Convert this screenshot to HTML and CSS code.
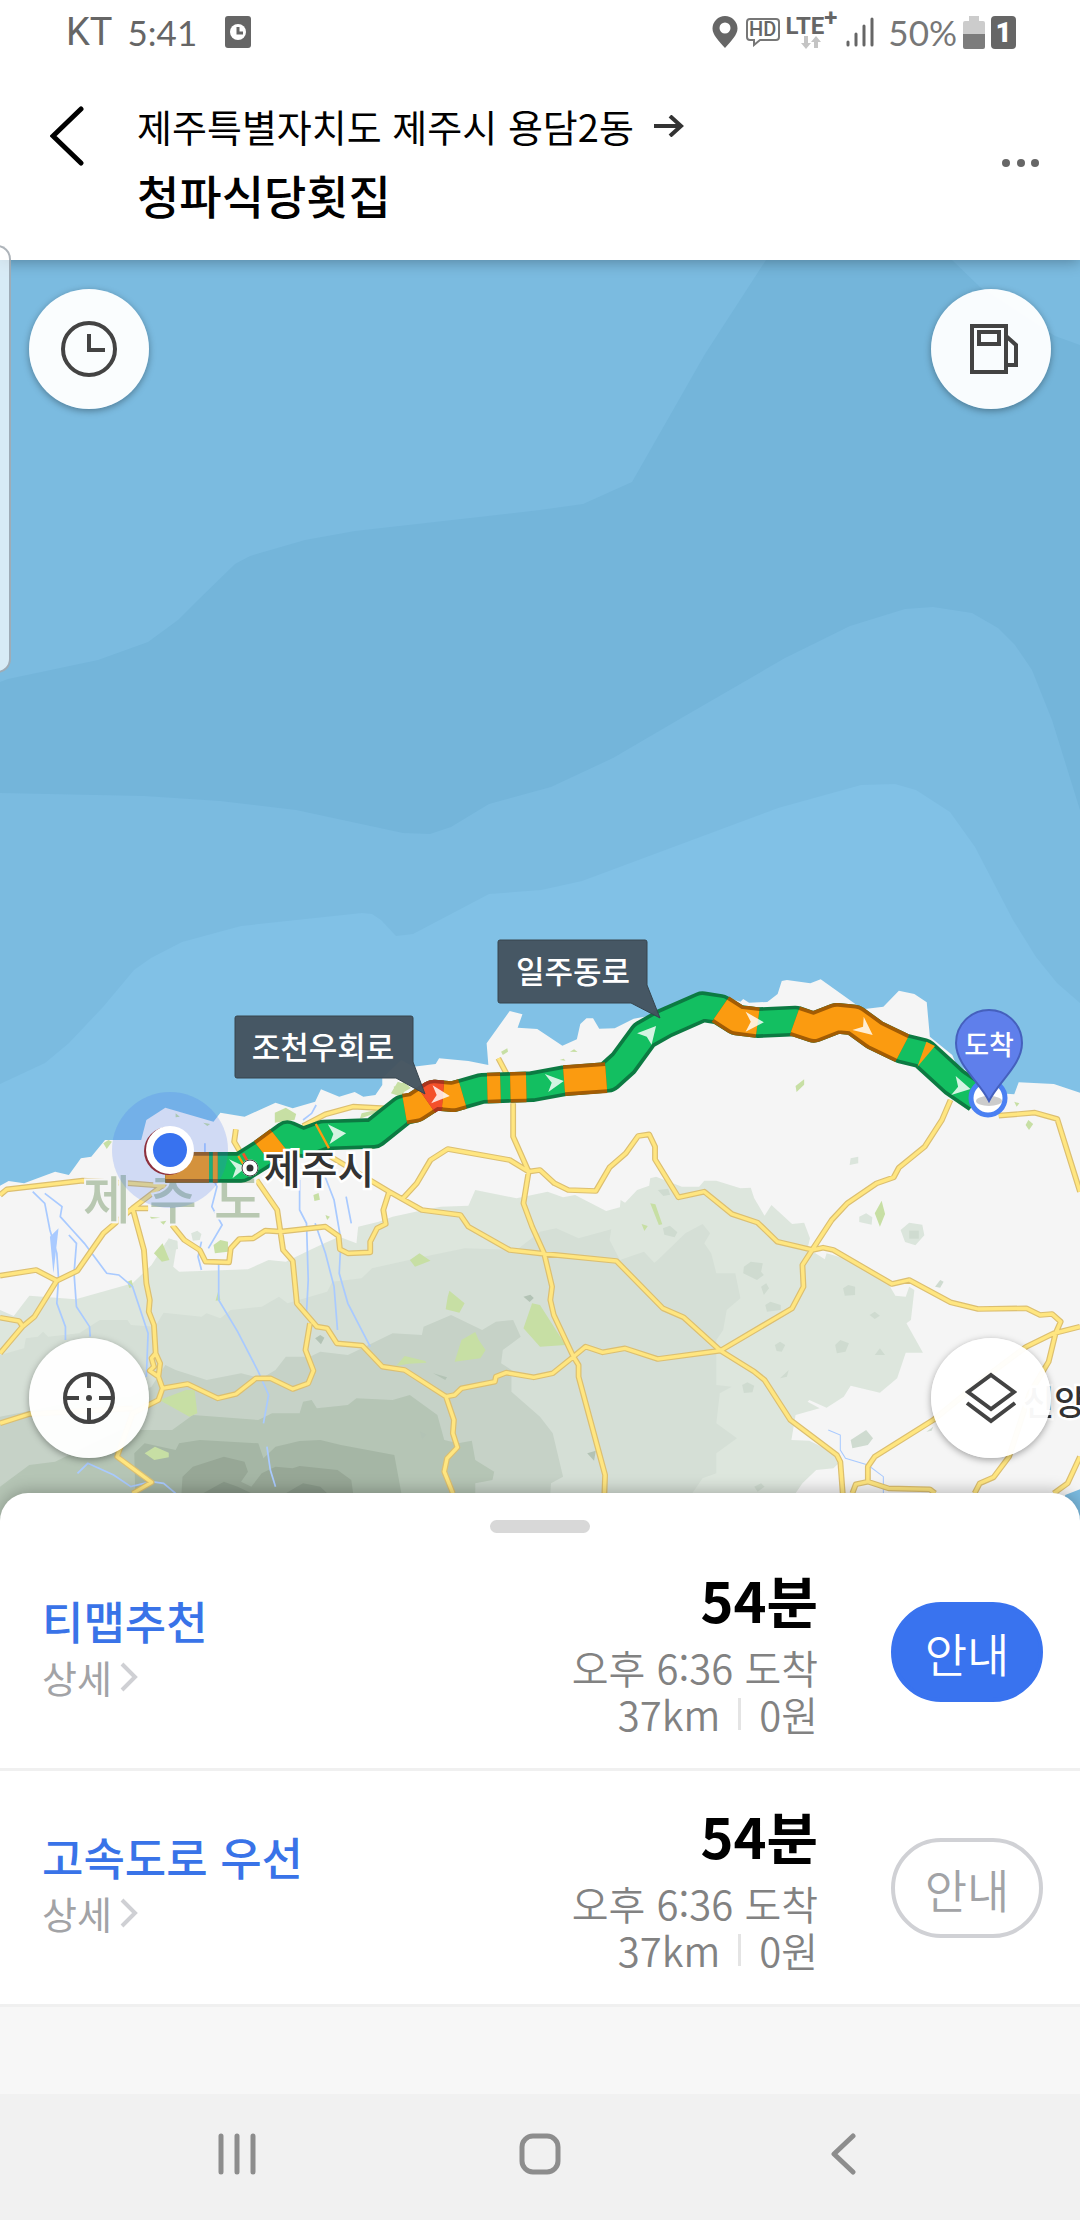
FILE: index.html
```html
<!DOCTYPE html>
<html lang="ko">
<head>
<meta charset="utf-8">
<meta name="viewport" content="width=device-width, initial-scale=1">
<title>청파식당횟집 경로</title>
<link rel="stylesheet" href="styles.css">
</head>
<body>
<div class="screen">
  <div class="status">
    <div class="status-side">
      <span class="carrier">KT</span>
      <span class="clock">5:41</span>
      <svg class="alarm" width="26" height="32" viewBox="0 0 26 32"><rect width="26" height="32" rx="3" fill="#666"/><circle cx="13" cy="16" r="8" fill="#fff"/><path d="M13 11v6h5" fill="none" stroke="#666" stroke-width="3"/></svg>
    </div>
    <div class="status-side status-right">
      <svg width="26" height="32" viewBox="0 0 26 32"><path fill="#666" fill-rule="evenodd" d="M13 0a12.500 12.500 0 0 1 12.500 12.500C25.500 19 19 25 13 32 7 25 .5 19 .5 12.500A12.500 12.500 0 0 1 13 0zm0 6.500a5.500 5.500 0 1 0 0 11 5.500 5.500 0 0 0 0-11z"/></svg>
      <span class="hd">
        <svg width="34" height="30" viewBox="0 0 34 30"><path d="M4 2h26q3 0 3 3v15q0 3-3 3H14l-6 5v-5H4q-3 0-3-3V5q0-3 3-3z" fill="none" stroke="#777" stroke-width="2"/></svg>
        <b>HD</b>
      </span>
      <span class="lte"><b>LTE<sup>+</sup></b>
        <svg width="20" height="13" viewBox="0 0 20 13"><path fill="#c4c4c4" d="M3 0h4v7h3l-5 6-5-6h3zM13 12h4V6h3l-5-6-5 6h3z"/></svg>
      </span>
      <svg width="28" height="30" viewBox="0 0 28 30"><path d="M2 25v3M10 17v11M18 9v19M26 2v26" stroke="#666" stroke-width="3" stroke-linecap="round"/></svg>
      <span class="percent">50%</span>
      <svg width="22" height="33" viewBox="0 0 22 33"><path fill="#ccc" d="M6 0h10v5h4q2 0 2 2v11H0V7q0-2 2-2h4z"/><path fill="#7c7c7c" d="M0 18h22v13q0 2-2 2H2q-2 0-2-2z"/></svg>
      <b class="sim">1</b>
    </div>
  </div>

  <header class="header">
    <button class="icon-button" aria-label="뒤로">
      <svg width="34" height="60" viewBox="0 0 34 60"><path d="M31 3L3 30l28 27" fill="none" stroke="#000" stroke-width="5" stroke-linecap="round"/></svg>
    </button>
    <div class="place">
      <p class="origin">제주특별자치도 제주시 용담2동
        <svg width="30" height="22" viewBox="0 0 30 22"><path d="M0 11h26M16 1l11 10-11 10" fill="none" stroke="#333" stroke-width="4"/></svg>
      </p>
      <h1 class="destination">청파식당횟집</h1>
    </div>
    <button class="icon-button more" aria-label="더보기">
      <svg width="38" height="10" viewBox="0 0 38 10"><g fill="#666"><circle cx="4" cy="5" r="4"/><circle cx="19" cy="5" r="4"/><circle cx="33" cy="5" r="4"/></g></svg>
    </button>
  </header>

  <main class="map">
    <svg class="map-art" viewBox="0 260 1080 1265" preserveAspectRatio="xMidYMid slice" role="img" aria-label="경로 지도">
      <rect y="260" width="1080" height="1265" fill="#7bbbe0"/>
      <path fill="#74b5da" d="M0 682l8-3 90-19 50-18 30-22 20-20 37-36 15-8 55-16 50-9 185-21 43-6 49-22 73-128 61-94h186l28 27 75 49 25 9V810L1052 720 1032 670 1015 645 998 628 972 613 933 607 905 609 850 626 785 658 678 720 613 758 551 787 489 804 451 827 430 834 403 833 296 810 220 801 144 796 0 793z"/>
      <path fill="#81c1e6" d="M0 1084L45 1063 69 1043 103 1007 134 970 151 958 182 942 241 926 362 913 372 914 381 920 396 936 413 934 489 894 541 890 582 881 778 808 861 785 895 784 916 790 950 812 975 847 1013 920 1036 957 1057 983 1080 1003V1260H0z"/>
      <g transform="translate(0 920) scale(.34439 .33333)">
        <path fill="#f5f5f5" d="M0 797L25 783 70 790 160 755 200 765 235 715 265 710 305 660 410 660 425 600 480 563 620 605 640 578 710 590 800 548 850 565 915 545 932 508 985 530 1030 516 1055 530 1090 525 1110 495 1110 475 1165 420 1200 440 1265 432 1275 415 1360 423 1418 435 1413 370 1480 273 1517 283 1503 323 1560 327 1633 377 1675 358 1685 312 1703 295 1722 295 1740 326 1785 325 1840 296 1900 285 2100 230 2150 245 2158 237 2175 248 2228 246 2258 222 2270 183 2285 180 2353 190 2383 178 2505 268 2565 260 2610 212 2655 222 2691 247 2700 350 2765 405 2775 430 2900 520 2945 523 2958 487 3060 492 3136 518V1708L3093 1725 3080 1830H0z"/>
        <path fill="#dde6dd" d="M0 1170L40 1188 85 1127 220 1138 385 1090 440 1035 490 955 515 965 503 1040 520 1055 720 1048 780 1020 830 1025 900 990 945 968 985 950 1035 970 1040 920 1100 905 1140 890 1230 870 1280 860 1360 857 1380 810 1500 835 1590 815 1635 832 1670 825 1760 873 1800 862 1802 840 1815 848 1850 810 1885 797 1888 775 1905 770 1980 800 2030 800 2045 782 2080 782 2150 805 2180 803 2190 835 2220 887 2240 855 2300 912 2335 908 2352 955 2345 985 2395 1018 2400 1000 2500 1030 2570 1075 2600 1127 2630 1130 2640 1100 2655 1110 2645 1200 2632 1210 2680 1298 2630 1298 2605 1375 2555 1418 2470 1397 2450 1430 2400 1463 2350 1440 2345 1445 2380 1465 2310 1485 2298 1560 2350 1562 2415 1595 2440 1625 2420 1645 2370 1650 2330 1690 2310 1720V1830H0z"/>
        <path fill="#d5dfd6" d="M0 1305L70 1285 75 1255 110 1250 125 1235 140 1250 230 1240 290 1200 370 1200 380 1215 450 1220 475 1178 585 1190 600 1180 640 1195 670 1170 760 1160 810 1130 835 1150 950 1115 965 1085 1050 1075 1080 1045 1230 1010 1350 985 1500 990 1568 935 1615 925 1680 955 1775 928 1770 960 1800 1020 1870 995 1900 1028 1910 1020 1990 940 2040 912 2062 940 2045 970 2065 1000 2080 1060 2135 1060 2150 1135 2110 1170 2100 1230 2080 1260V1395L2125 1400 2090 1420 2080 1510 2140 1555 2080 1600V1660L2040 1675 2010 1720V1830H0z"/>
        <path fill="#c6d2c7" d="M0 1490L200 1450 380 1430 440 1400 480 1335 510 1350 600 1380 700 1360 760 1375 800 1350 830 1310 900 1310 930 1295 1010 1305 1060 1280 1140 1240 1225 1245 1230 1220 1310 1185 1400 1230 1440 1205 1490 1200 1512 1250 1460 1290 1455 1330 1485 1350V1415L1568 1490 1605 1540 1635 1670 1600 1690 1590 1830H0z"/>
        <path fill="#b5c5b5" d="M0 1700L85 1635 160 1625 230 1590 350 1530 500 1530 560 1485 750 1500 790 1480 870 1480 880 1445 905 1440 920 1465 1010 1455 1035 1435 1140 1440 1190 1425 1270 1485 1290 1560 1330 1570 1370 1562 1380 1620 1435 1655 1430 1680 1380 1690V1830H0z"/>
        <path fill="#a5b6a5" d="M395 1830L390 1600 420 1570 510 1590 520 1570 580 1560 750 1570 765 1615 800 1580 870 1563 930 1560 990 1575 1145 1605 1185 1830z"/>
        <path fill="#97a796" d="M520 1830L530 1670 560 1640 650 1610 710 1625 720 1655 700 1685 730 1700 760 1660 800 1640 850 1645 870 1638 980 1650 1020 1680 1040 1830z"/>
        <path fill="#8a9a8a" d="M590 1720L650 1685 690 1700 730 1720zM830 1720L880 1690 930 1700 950 1720z"/>
        <g fill="#cfdbd0">
          <path d="M2160 1040l20-15 35 5-5 25 8 10-20 15-40-20zM2210 1100l15-10 8 15-15 20zM2222 1155l15-10 30 10v15l-40 5zM2448 1105l15-10 20 5v25l-30 2zM2525 1185l15-10 15 12-15 10zM2250 1275l15-10 15 10-10 20-15-2zM2425 1275l15-15 25 10-10 25-25 5zM2540 1305l15-20 15 20zM2265 1375l25-25-5 20zM2155 1395l15-8 20 10-5 20-25 2zM2470 1560l45-30 20 25-15 20-45 10zM2190 1700l20-10 10 10-20 15zM2715 1100l15-20 10 5-10 18zM2690 1535l20-15-5 12zM1925 925l20-8 22 20-8 15-30-8zM1910 810l30-4 6 18-20 4z"/>
        </g>
        <g fill="#dbe5dc"><path d="M2615 930l25-22 38 6 6 32-26 30-30-10zM2495 890l20-10 18 12-2 22-36-8zM2470 715l22-5v20l-25 5zM555 940l18-8 12 10-5 18-20 2zM480 970l15-12 20 4 2 25-20 4z"/></g>
        <path fill="#cfdbd0" d="M2640 932h28v24h-28z"/>
        <g fill="#b3c3b5"><path d="M915 1255l15-10 12 8-10 20zM1520 1130l20-6 10 10-12 12zM1258 1360l40 12-5 8zM1220 1535l18 8-12 15zM1705 1600l25-8-5 30z"/></g>
        <g fill="#c7dfa4">
          <path d="M798 578L830 563 860 582 855 600 798 608zM1135 520l20-35 30 10-20 35zM1143 500l30-14 20 18-40 24zM300 670l15-10 10 5-15 22zM620 975l20-15 22 5v30l-38 5zM447 1000l25-30 20 50-22 5zM463 1440L540 1410 565 1410 573 1480 550 1490zM420 1600l30-20 40 18v14l-42 8zM370 1085l12-5 5 20-12 4zM626 1142l8-30 6 28zM1190 1020l28-20 32 22-45 18zM1300 1130l5-18 44 38-15 28-40-10zM1545 1150l23 5 65 105 10 15-75 5-48-55zM1320 1325l20-65 40-24 10 24 20 30-15 25zM1150 1338l25-30 60 15 3 5-50 3zM1888 850l15 3 20 60-10 2zM1863 912l18 6-10 15zM2540 880l20-38 10 40-15 38zM2310 498l25-20v16l-22 22zM2945 545l15 5-8 10zM2978 615l8-15 14 12-12 18zM1455 395l18-10 2 10-15 10zM1655 395l12-7 10 8zM1625 420l12-4 5 6zM1050 580l50-12v8l-55 20zM910 825l15-6 4 20-16 4zM945 885l13 5-8 10zM590 608l20 4-8 6zM435 890l30 3-25 3zM465 905l18-3-8 12zM510 580l12 10-12 2z"/>
        </g>
        <g fill="none" stroke="#a9caff" stroke-width="5">
          <path d="M95 815L130 850 145 930 165 1000 170 1075 165 1150 190 1220 190 1260M130 820L180 860 175 890 210 930 245 970 310 1060 345 1065 385 1100 430 1240 425 1370M200 945L222 970 215 1060 222 1160 260 1220 262 1250M595 670L595 730 630 800 615 860 645 915 605 985M635 1030L635 1140 690 1235 750 1355 780 1425 765 1510M775 1580L785 1650 800 1700M585 965L575 1010 585 1050M870 780L870 870 890 910 895 1080 890 1180M915 910L945 1000 970 1100 980 1230M940 760L970 840 990 960 985 1060 1010 1150 1075 1280M1005 830L1020 910M918 555L905 580 880 600M225 1660L255 1630 330 1665 380 1700 440 1685 475 1690 510 1720"/>
          <path stroke-width="3" d="M2405 1530L2440 1545 2440 1590 2455 1615 2520 1635 2565 1670V1720"/>
        </g>
        <path fill="#a9caff" d="M145 950L170 925 155 1060z"/>
        <g fill="none" stroke-linejoin="round" stroke="#dcbf70" stroke-width="17">
          <path id="road-net" d="M0 825L20 808 240 782 380 790 480 798M480 790L385 865 300 940 225 1052 165 1082 100 1190 65 1220 0 1300M0 1067L105 1050 165 1082M0 1193L55 1203 67 1220M385 865L418 990 425 1090 435 1140 432 1175 447 1215 452 1300 465 1330 460 1370 472 1405 460 1440 385 1480 340 1610 440 1687 385 1720M452 1300L440 1315 447 1340 435 1352 460 1370M385 865H430M500 915L535 960 580 990 597 1025 665 1027 670 985 695 957 735 955 770 932 815 935 945 920 983 948 987 988 1010 1000 1075 997 1075 965 1095 925 1120 912 1113 870 1130 815M745 780L805 870 822 990 850 1023 862 1150 920 1220 950 1225 978 1270 1052 1277 1110 1340 1175 1350 1295 1430 1318 1500 1315 1540 1328 1582 1298 1615 1290 1655 1315 1720M900 1210L887 1290 910 1352 895 1390 850 1407 785 1375 743 1375 685 1422 632 1435 545 1392 472 1405M0 1510L85 1482 385 1465M960 710L1130 815 1225 870 1337 885 1360 920 1480 990 1568 1000 1790 1023 1925 1165 1985 1192 2092 1292 2190 1355 2220 1380 2295 1500 2430 1605 2440 1625 2447 1720M1170 835L1210 790 1250 720 1300 687 1480 720 1535 755 1568 750 1610 790 1650 810 1730 813 1770 742 1817 700 1853 648 1885 643 1902 680 1902 718 1970 832 2045 815 2125 882 2200 908 2257 965 2360 990 2390 983 2420 990 2590 1092 2640 1080 2760 1147 2840 1167 2980 1165 3020 1185 3055 1182 3080 1205 3065 1240 3045 1325 2990 1420 2930 1610 2885 1672 2845 1690 2830 1720M1490 550L1490 650 1535 755 1520 850 1545 920 1580 1000 1603 1100 1598 1140 1608 1185 1665 1310 1680 1335 1680 1370 1757 1665 1755 1720M1295 1430L1320 1425 1340 1405 1437 1385 1440 1370 1470 1358 1550 1372 1605 1360 1665 1310 1700 1280 1750 1297 1815 1285 1910 1317 2092 1292 2300 1165 2333 1100 2330 1035 2358 990 2415 900 2460 850 2545 790 2595 772 2610 743 2685 680 2735 600 2760 540M2900 587L3005 578 3070 597 3136 815M3136 1220L3060 1240 2980 1280 2870 1365 2710 1500 2540 1610 2520 1640 2520 1685 2580 1705 2700 1708 2715 1720M2475 1720L2485 1693 2520 1685M3136 1610L3100 1690 3060 1720M880 618L945 583 1025 560 1120 565M685 628L680 665 700 700M1447 415L1470 460"/>
        </g>
        <use href="#road-net" fill="none" stroke="#ffe680" stroke-width="10" stroke-linejoin="round"/>
      </g>

      <g class="region" font-size="52"><text x="83" y="1219">제</text><text x="149" y="1219">주</text><text x="214" y="1219">도</text></g>

      <g transform="translate(0 920) scale(.34439 .33333)" fill="none" stroke-linejoin="round">
        <path stroke="#0c7a42" stroke-width="92" d="M480 742L700 742 765 700 835 647 880 668 940 645 1085 640 1170 570 1205 562 1260 525 1315 530 1400 505 1545 500 1640 482 1765 472 1810 430 1870 345 1930 310 2040 260 2090 268 2140 300 2200 308 2310 303 2363 322 2430 295 2480 300 2540 345 2620 385 2680 400 2770 485 2840 535"/>
        <path stroke="#13bf61" stroke-width="70" d="M480 742L700 742 765 700 835 647 880 668 940 645 1085 640 1170 570 1205 562 1260 525 1315 530 1400 505 1545 500 1640 482 1765 472 1810 430 1870 345 1930 310 2040 260 2090 268 2140 300 2200 308 2310 303 2363 322 2430 295 2480 300 2540 345 2620 385 2680 400 2770 485 2840 535"/>
        <path stroke="#a25c04" stroke-width="92" d="M480 742H607M618 742H632M765 700L812 664M1175 567L1205 562 1260 525 1315 530 1343 522M1415 504L1453 503M1482 502L1528 501M1638 482L1760 473M2092 268L2140 300 2200 308M2308 303L2363 322 2430 295 2480 300 2540 345 2620 385"/>
        <path stroke="#fb9b10" stroke-width="70" d="M480 742H607M618 742H632M765 700L812 664M1175 567L1205 562 1260 525 1315 530 1343 522M1415 504L1453 503M1482 502L1528 501M1638 482L1760 473M2092 268L2140 300 2200 308M2308 303L2363 322 2430 295 2480 300 2540 345 2620 385"/>
        <path stroke="#a8341f" stroke-width="92" d="M1238 540L1260 525 1286 527"/>
        <path stroke="#f4502a" stroke-width="70" d="M1238 540L1260 525 1286 527"/>
        <path stroke="#fb9b10" stroke-width="7" d="M917 612L955 685M692 708L708 735"/>
        <path fill="#fb9b10" d="M2690 365L2715 378 2664 440z"/>
        <path stroke="#f4502a" stroke-width="8" d="M706 700L722 730"/>
        <g fill="#fff" fill-opacity=".82">
          <path d="M665 718L715 742 675 775 685 745zM952 613L1005 640 957 672 968 642zM1256 496L1306 528 1252 550 1268 525zM1582 462L1637 483 1592 516 1602 488zM1905 318L1892 374 1878 350 1850 340zM2165 275L2218 307 2165 335 2180 305zM2508 290L2534 345 2475 330 2506 320zM2775 468L2818 507 2762 525 2782 500z"/>
        </g>
      </g>

      <g class="city"><circle cx="250" cy="1168" r="7" fill="#333" stroke="#fff" stroke-width="3"/><circle cx="250" cy="1168" r="5" fill="#333" stroke="#fff" stroke-width="3"/><circle cx="250" cy="1168" r="8" fill="none" stroke="#444" stroke-width="1"/>
        <text x="264" y="1184" font-size="40">제주시</text>
        <text x="1023" y="1415" font-size="34">신양</text>
      </g>

      <circle cx="170" cy="1150" r="58" fill="#3a6df0" fill-opacity=".2"/>
      <circle cx="168" cy="1151" r="24" fill="#8d2f3c"/>
      <circle cx="170" cy="1150" r="24" fill="#fff"/>
      <circle cx="170" cy="1150" r="17" fill="#3872ef"/>

      <circle cx="988" cy="1098" r="17" fill="#fff" stroke="#4a80f2" stroke-width="5"/>
      <ellipse cx="989" cy="1101" rx="13" ry="5" fill="#000" fill-opacity=".2"/>
      <path d="M989 1101C980 1082 956 1065 956 1043a33 33 0 0 1 66 0C1022 1065 998 1082 989 1101z" fill="#5f7feb" stroke="#4560bd" stroke-width="2"/>

      <g fill="#44545f" stroke="#36444d" stroke-width="1" stroke-linejoin="round">
        <path fill-opacity=".97" d="M237 1016H411Q413 1016 413 1018V1062L425 1094 396 1078H237Q235 1078 235 1076V1018Q235 1016 237 1016z"/>
        <path fill-opacity=".97" d="M500 940H645Q647 940 647 942V985L660 1018 631 1003H500Q498 1003 498 1001V942Q498 940 500 940z"/>
      </g>
      <g class="callout" text-anchor="middle" fill="#fff">
        <text x="323" y="1059" font-size="31">조천우회로</text>
        <text x="573" y="983" font-size="31">일주동로</text>
        <text x="989" y="1055" font-size="27">도착</text>
      </g>
    </svg>
    <div class="controls">
      <div class="control-row">
        <button class="round" aria-label="출발 시간">
          <svg width="56" height="56" viewBox="0 0 56 56"><circle cx="28" cy="28" r="26" fill="none" stroke="#434343" stroke-width="4"/><path d="M28 13v16h16" fill="none" stroke="#434343" stroke-width="4"/></svg>
        </button>
        <button class="round" aria-label="주유소">
          <svg class="pump" width="50" height="52" viewBox="0 0 50 52"><path d="M2 3h34v46H2zM9 9h20v12H9zM36 13l10 9v20H36" fill="none" stroke="#434343" stroke-width="4"/></svg>
        </button>
      </div>
      <div class="control-row">
        <button class="round" aria-label="현재 위치">
          <svg width="52" height="52" viewBox="0 0 52 52"><g fill="none" stroke="#434343" stroke-width="4"><circle cx="26" cy="26" r="24"/><path d="M26 2v14M26 36v14M2 26h14M36 26h14"/></g><circle cx="26" cy="26" r="3" fill="#434343"/></svg>
        </button>
        <button class="round" aria-label="지도 레이어">
          <svg width="52" height="52" viewBox="0 0 52 52"><path d="M26 3l23 17-23 17L3 20zM2 31l24 18 24-18" fill="none" stroke="#434343" stroke-width="4"/></svg>
        </button>
      </div>
    </div>
  </main>

  <section class="sheet">
    <div class="grip"></div>
    <article class="route">
      <div class="route-name">
        <h2>티맵추천</h2>
        <a href="#detail-1">상세 <svg width="18" height="30" viewBox="0 0 18 30"><path d="M2 2l13 13L2 28" fill="none" stroke="#cfd0d4" stroke-width="4"/></svg></a>
      </div>
      <div class="route-info">
        <strong>54분</strong>
        <span>오후 6:36 도착</span>
        <span class="cost"><span>37km</span><i></i><span>0원</span></span>
      </div>
      <button class="go go-primary">안내</button>
    </article>
    <article class="route">
      <div class="route-name">
        <h2>고속도로 우선</h2>
        <a href="#detail-2">상세 <svg width="18" height="30" viewBox="0 0 18 30"><path d="M2 2l13 13L2 28" fill="none" stroke="#cfd0d4" stroke-width="4"/></svg></a>
      </div>
      <div class="route-info">
        <strong>54분</strong>
        <span>오후 6:36 도착</span>
        <span class="cost"><span>37km</span><i></i><span>0원</span></span>
      </div>
      <button class="go">안내</button>
    </article>
    <div class="spacer"></div>
  </section>

  <nav class="system-nav">
    <button aria-label="최근 앱"><svg width="38" height="42" viewBox="0 0 38 42"><path d="M3 3v36M19 3v36M35 3v36" stroke="#8d8d8d" stroke-width="5" stroke-linecap="round"/></svg></button>
    <button aria-label="홈"><svg width="42" height="42" viewBox="0 0 42 42"><rect x="3" y="3" width="36" height="36" rx="11" fill="none" stroke="#8d8d8d" stroke-width="5"/></svg></button>
    <button aria-label="이전"><svg width="26" height="42" viewBox="0 0 26 42"><path d="M23 3L4 21l19 18" fill="none" stroke="#8d8d8d" stroke-width="5" stroke-linecap="round" stroke-linejoin="round"/></svg></button>
  </nav>

  <div class="edge-handle"></div>
</div>
</body>
</html>
```

FILE: styles.css
```css
* { box-sizing: border-box; }

body {
  margin: 0;
  background: #fff;
  color: #000;
  font-family: "Noto Sans CJK KR", sans-serif;
}

button {
  padding: 0;
  border: 0;
  background: none;
  font: inherit;
}

svg { display: block; }

.screen {
  position: relative;
  display: flex;
  flex-direction: column;
  min-height: 100vh;
  overflow: hidden;
}

.status {
  position: relative;
  z-index: 2;
  display: flex;
  justify-content: space-between;
  height: 64px;
  padding: 0 64px 0 66px;
  background: #fff;
  color: #666;
}

.status-side {
  display: flex;
  align-items: center;
  height: 64px;
}

.carrier { font: 400 38px/64px Roboto, sans-serif; }
.clock { margin-left: 15px; font: 400 35px/64px Lato, sans-serif; }
.alarm { margin-left: 28px; }

.status-right { gap: 6px; }

.hd { position: relative; margin-left: 2px; }
.hd b {
  position: absolute;
  inset: 0 0 5px;
  text-align: center;
  font: 500 20px/25px Roboto, sans-serif;
}

.lte {
  display: flex;
  flex-direction: column;
  align-items: center;
  margin-right: 3px;
}
.lte b { font: 700 24px/20px Roboto, sans-serif; }
.lte sup { font-size: 24px; line-height: 0; vertical-align: 8px; }

.percent { margin-left: 8px; font: 400 35px/64px Lato, sans-serif; color: #777; }

.sim {
  width: 25px;
  height: 33px;
  border-radius: 4px;
  background: #666;
  color: #fff;
  text-align: center;
  font: 900 28px/33px Roboto, sans-serif;
}

.header {
  position: relative;
  z-index: 1;
  display: flex;
  align-items: flex-start;
  height: 196px;
  padding: 34px 40px 0 50px;
  background: #fff;
  box-shadow: 0 2px 14px rgba(0, 0, 0, .3);
}

.header .icon-button { margin-top: 8px; }
.header .more { margin-top: 60px; }

.place {
  flex: 1;
  padding-left: 53px;
}

.origin {
  display: flex;
  align-items: center;
  gap: 20px;
  margin: 0;
  font-size: 38px;
  line-height: 56px;
}

.destination {
  margin: 8px 0 0;
  font-size: 46px;
  font-weight: 500;
  line-height: 64px;
}

.map {
  position: relative;
  flex: 1 0 1265px;
}

.map-art {
  position: absolute;
  inset: 0;
  width: 100%;
  height: 100%;
}

.map-art text { font-weight: 500; }
.region { fill: #b8c8b1; stroke: #f5f5f5; stroke-width: 4px; paint-order: stroke; }
.city text { fill: #333; stroke: #fff; stroke-width: 5px; paint-order: stroke; }

.controls {
  position: absolute;
  inset: 0;
  display: flex;
  flex-direction: column;
  justify-content: space-between;
  padding: 29px 29px 67px;
}

.control-row {
  display: flex;
  justify-content: space-between;
}

.round {
  display: grid;
  place-items: center;
  width: 120px;
  height: 120px;
  border-radius: 50%;
  background: rgba(255, 255, 255, .96);
  box-shadow: 0 2px 7px rgba(0, 0, 0, .35);
}

.pump { margin-left: 8px; }

.sheet {
  position: relative;
  margin-top: -32px;
  border-radius: 28px 28px 0 0;
  background: #fff;
  box-shadow: 0 -2px 16px rgba(0, 0, 0, .25);
}

.grip {
  width: 100px;
  height: 42px;
  margin: 0 auto;
  padding-top: 27px;
}
.grip::before {
  display: block;
  height: 13px;
  border-radius: 7px;
  background: #d8d8d8;
  content: "";
}

.route {
  display: flex;
  align-items: center;
  height: 236px;
  padding: 0 37px 0 42px;
  border-bottom: 3px solid #f0f0f0;
}

.route-name {
  flex: 1;
  margin-bottom: 5px;
}

.route-name h2 {
  margin: 0;
  color: #3973e8;
  font-size: 45px;
  font-weight: 500;
  line-height: 56px;
}

.route-name a {
  display: flex;
  align-items: center;
  gap: 8px;
  color: #a2a3a6;
  font-size: 38px;
  line-height: 56px;
  text-decoration: none;
}

.route-info {
  display: flex;
  flex-direction: column;
  align-items: flex-end;
  margin: 0 73px 12px 0;
  color: #828282;
  font-size: 40px;
  font-weight: 350;
  line-height: 47px;
}

.route-info strong {
  color: #000;
  font-size: 56px;
  font-weight: 700;
  line-height: 90px;
}

.cost {
  display: flex;
  align-items: center;
  gap: 18px;
}
.cost i {
  width: 3px;
  height: 32px;
  background: #e4e4e4;
}

.go {
  width: 152px;
  height: 100px;
  border: 4px solid #d0d1d5;
  border-radius: 50px;
  color: #a2a3a6;
  font-size: 46px;
  font-weight: 350;
  line-height: 64px;
}

.go-primary {
  border-color: #3973ef;
  background: #3973ef;
  color: #fff;
}

.spacer {
  height: 87px;
  background: #f7f7f7;
}

.system-nav {
  position: relative;
  display: grid;
  grid-template-columns: repeat(3, 1fr);
  height: 126px;
  padding: 0 86px 6px;
  background: #f1f1f1;
}

.system-nav button {
  display: grid;
  place-items: center;
}

.edge-handle {
  position: absolute;
  z-index: 2;
  top: 245px;
  left: -20px;
  width: 31px;
  height: 428px;
  border: 2px solid rgba(120, 130, 140, .6);
  border-radius: 14px;
  background: rgba(255, 255, 255, .7);
}
```
